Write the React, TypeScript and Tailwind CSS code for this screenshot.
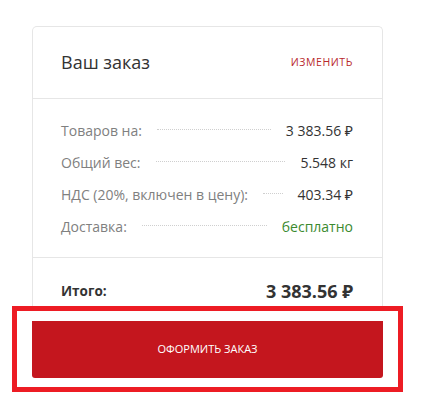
import React from "react";

type Row = {
    label: string;
    value: string;
    green?: boolean;
};

const rows: Row[] = [
    { label: "Товаров на:", value: "3 383.56 ₽" },
    { label: "Общий вес:", value: "5.548 кг" },
    { label: "НДС (20%, включен в цену):", value: "403.34 ₽" },
    { label: "Доставка:", value: "бесплатно", green: true },
];

export default function App() {
    return (
        <div className="relative w-[423px] h-[408px] bg-white font-['Open_Sans','Noto_Sans',sans-serif]">
            <div className="pt-[26px] pl-[32px] w-[383px]">
                {/* card */}
                <div className="border-x border-t border-[#e6e6e6] rounded-t-[5px]">
                    <div className="h-[72px] flex items-center justify-between pl-[28px] pr-[29px] border-b border-[#e6e6e6]">
                        <span className="text-[18px] text-[#333]">Ваш заказ</span>
                        <span className="text-[10.5px] tracking-[0.6px] text-[#b8282c] uppercase">изменить</span>
                    </div>

                    <div className="pt-[15px] pb-[15px] pl-[28px] pr-[29px] border-b border-[#e6e6e6]">
                        {rows.map((row, i) => (
                            <div key={i} className="h-[32px] flex items-center text-[14px]">
                                <span className="text-[#808080] whitespace-nowrap">{row.label}</span>
                                <span className="flex-1 mx-[15px] mb-[2px] border-b border-dotted border-[#cfcfcf]" />
                                <span className={row.green ? "text-[#3b8a2f] whitespace-nowrap" : "text-[#333] whitespace-nowrap"}>
                                    {row.value}
                                </span>
                            </div>
                        ))}
                    </div>

                    <div className="h-[48px] pt-[22px] pl-[28px] pr-[29px] flex items-start justify-between">
                        <span className="text-[13.5px] font-bold text-[#333] leading-[22px]">Итого:</span>
                        <span className="text-[18px] font-bold text-[#333] leading-[22px]">3 383.56 ₽</span>
                    </div>
                </div>

                <div className="mt-[15px] h-[57px] bg-[#c4161e] rounded-b-[3px] flex items-center justify-center">
                    <span className="text-[11px] text-white uppercase">оформить заказ</span>
                </div>
            </div>

            {/* highlight frame */}
            <div className="absolute left-[12px] top-[306px] w-[391px] h-[86px] border-[5px] border-[#ed1c24]" />
        </div>
    );
}
